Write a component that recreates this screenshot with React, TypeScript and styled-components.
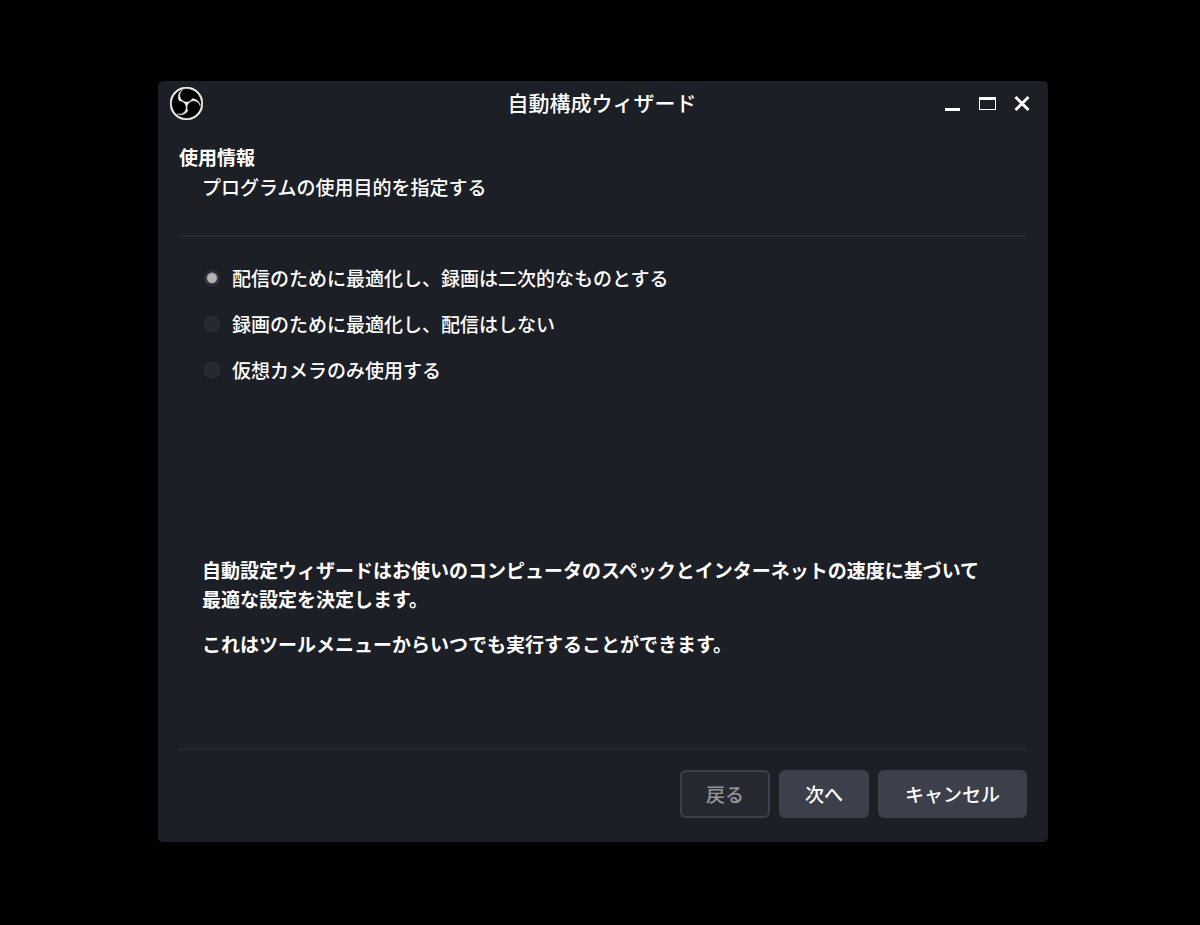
import React, { useState } from "react";
import styled, { createGlobalStyle } from "styled-components";
import { SiObsstudio } from "react-icons/si";

const GlobalStyle = createGlobalStyle`
  *, *::before, *::after { box-sizing: border-box; }
  body {
    margin: 0;
    background: #000000;
    color: #fefefe;
    font-family: "Noto Sans CJK JP", "Noto Sans", sans-serif;
    font-size: 19px;
    line-height: 29px;
  }
  button { font: inherit; color: inherit; cursor: pointer; }
`;

const Desktop = styled.div`
  display: flex;
  min-height: 100vh;
  padding: 81px 152px 83px 158px;
`;

const Window = styled.main`
  flex: 1;
  min-width: 0;
  display: flex;
  flex-direction: column;
  background: #1d1f26;
  border-radius: 5px;
`;

const TitleBar = styled.header`
  display: grid;
  grid-template-columns: 1fr auto 1fr;
  align-items: center;
  height: 45px;
  padding: 0 14px 0 12px;
`;

const Logo = styled.span`
  display: flex;
  width: 33px;
  height: 33px;
  border-radius: 50%;
  background: #000000;
  color: #f4f4f0;
`;

const Title = styled.h1`
  margin: 0;
  padding-bottom: 2px;
  font-size: 21px;
  font-weight: 500;
`;

const WindowControls = styled.div`
  display: flex;
  justify-content: flex-end;
  gap: 11px;
  padding-bottom: 2px;
`;

const ControlButton = styled.button`
  display: flex;
  align-items: center;
  justify-content: center;
  width: 24px;
  height: 24px;
  padding: 0;
  border: 0;
  background: none;
`;

const Intro = styled.section`
  margin: 0 21px;
  padding: 16px 0 34px;
  border-bottom: 2px solid #25272f;
`;

const Heading = styled.h2`
  margin: 0;
  font-size: 19px;
  line-height: 30px;
  font-weight: 700;
`;

const Subtitle = styled.p`
  margin: 0;
  padding-left: 23px;
  font-weight: 500;
`;

const Choices = styled.fieldset`
  display: flex;
  flex-direction: column;
  align-items: flex-start;
  gap: 17px;
  margin: 0;
  padding: 26px 44px 0;
  border: 0;
`;

const Choice = styled.label`
  display: flex;
  align-items: center;
  gap: 10px;
  font-weight: 500;
`;

const Radio = styled.input`
  appearance: none;
  width: 20px;
  height: 20px;
  margin: 0;
  border: 1px solid #16171c;
  border-radius: 50%;
  background: #272932;
  &:checked {
    background: radial-gradient(circle, #b5b5b5 4px, #85868a 5px, #272932 6px);
  }
`;

const Notes = styled.section`
  flex: 1;
  padding: 171px 44px 0;
  font-weight: 700;
`;

const Note = styled.p`
  max-width: 790px;
  margin: 0 0 16px;
`;

const Footer = styled.footer`
  display: flex;
  justify-content: flex-end;
  gap: 9px;
  margin: 0 21px;
  padding: 20px 0 24px;
  border-top: 2px solid #25272f;
`;

const DialogButton = styled.button<{ $wide?: boolean }>`
  width: ${({ $wide }) => ($wide ? 149 : 90)}px;
  height: 48px;
  padding: 0 0 2px;
  border: 2px solid #3c404b;
  border-radius: 6px;
  background: #3c404b;
  font-weight: 500;
  &:disabled {
    background: #272932;
    color: #969696;
    cursor: default;
  }
`;

const usages = [
  { id: "streaming", label: "配信のために最適化し、録画は二次的なものとする" },
  { id: "recording", label: "録画のために最適化し、配信はしない" },
  { id: "virtualcam", label: "仮想カメラのみ使用する" },
];

export default function App() {
  const [usage, setUsage] = useState("streaming");
  return (
    <>
      <GlobalStyle />
      <Desktop lang="ja">
        <Window>
          <TitleBar>
            <Logo>
              <SiObsstudio size={33} strokeWidth="0.4" aria-hidden="true" />
            </Logo>
            <Title>自動構成ウィザード</Title>
            <WindowControls>
              <ControlButton type="button" aria-label="最小化">
                <svg width="24" height="24" viewBox="0 0 24 24">
                  <path d="M5 17h15v3H5z" fill="#fff" />
                </svg>
              </ControlButton>
              <ControlButton type="button" aria-label="最大化">
                <svg width="24" height="24" viewBox="0 0 24 24">
                  <path d="M4 6h17v13H4zM5 9v9h15V9z" fill="#fff" fillRule="evenodd" />
                </svg>
              </ControlButton>
              <ControlButton type="button" aria-label="閉じる">
                <svg width="24" height="24" viewBox="0 0 24 24">
                  <path d="M5.5 6l13 13M18.5 6l-13 13" stroke="#fff" strokeWidth="3" />
                </svg>
              </ControlButton>
            </WindowControls>
          </TitleBar>
          <Intro>
            <Heading>使用情報</Heading>
            <Subtitle>プログラムの使用目的を指定する</Subtitle>
          </Intro>
          <Choices aria-label="使用情報">
            {usages.map(({ id, label }) => (
              <Choice key={id}>
                <Radio
                  type="radio"
                  name="usage"
                  value={id}
                  checked={usage === id}
                  onChange={() => setUsage(id)}
                />
                {label}
              </Choice>
            ))}
          </Choices>
          <Notes>
            <Note>
              自動設定ウィザードはお使いのコンピュータのスペックとインターネットの速度に基づいて最適な設定を決定します。
            </Note>
            <Note>これはツールメニューからいつでも実行することができます。</Note>
          </Notes>
          <Footer>
            <DialogButton type="button" disabled>戻る</DialogButton>
            <DialogButton type="button">次へ</DialogButton>
            <DialogButton type="button" $wide>キャンセル</DialogButton>
          </Footer>
        </Window>
      </Desktop>
    </>
  );
}
